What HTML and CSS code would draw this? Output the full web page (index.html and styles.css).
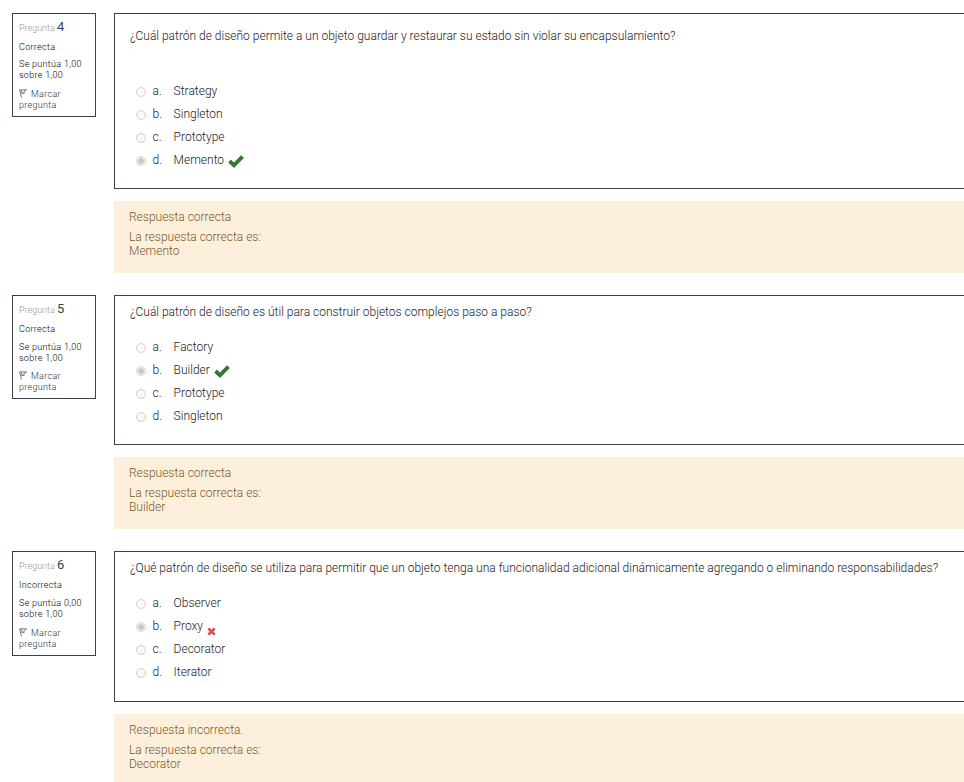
FILE: index.html
```html
<!DOCTYPE html>
<html lang="es">
<head>
<meta charset="utf-8">
<title>Cuestionario</title>
<link rel="stylesheet" href="styles.css">
</head>
<body>
<svg width="0" height="0" class="defs">
  <symbol id="check" viewBox="0 0 16 13"><path d="M0.2 7.4 2.8 4.6 6 7.4 13 0.3 15.9 3 6 12.9z"/></symbol>
  <symbol id="cross" viewBox="0 0 9 9"><path d="M0.4 2.3 2.2 0.5 4.5 2.5 6.8 0.5 8.6 2.3 6.5 4.5 8.6 6.7 6.8 8.5 4.5 6.5 2.2 8.5 0.4 6.7 2.5 4.5z"/></symbol>
  <symbol id="flag" viewBox="0 0 8 9"><path d="M0.3 0.9H7.5L4.8 2.8 5.2 4.4H2.4M0.7 1.2 2.5 8.5M2.2 1.2 3 4.2" fill="none" stroke="currentColor" stroke-width=".8"/></symbol>
</svg>
<main>
  <section class="question first">
    <aside class="info">
      <h3><span>Pregunta</span> <b>4</b></h3>
      <p class="state">Correcta</p>
      <p class="grade">Se puntúa 1,00<br>sobre 1,00</p>
      <p class="mark"><svg class="flag"><use href="#flag"/></svg>Marcar<br>pregunta</p>
    </aside>
    <div class="content">
      <div class="formulation">
        <p class="qtext">¿Cuál patrón de diseño permite a un objeto guardar y restaurar su estado sin violar su encapsulamiento?</p>
        <ul>
          <li><i class="radio"></i><span class="num">a.</span><span>Strategy</span></li>
          <li><i class="radio"></i><span class="num">b.</span><span>Singleton</span></li>
          <li><i class="radio"></i><span class="num">c.</span><span>Prototype</span></li>
          <li><i class="radio on"></i><span class="num">d.</span><span>Memento</span><svg class="check"><use href="#check"/></svg></li>
        </ul>
      </div>
      <div class="feedback"><p>Respuesta correcta</p><p>La respuesta correcta es:<br>Memento</p></div>
    </div>
  </section>
  <section class="question second">
    <aside class="info">
      <h3><span>Pregunta</span> <b>5</b></h3>
      <p class="state">Correcta</p>
      <p class="grade">Se puntúa 1,00<br>sobre 1,00</p>
      <p class="mark"><svg class="flag"><use href="#flag"/></svg>Marcar<br>pregunta</p>
    </aside>
    <div class="content">
      <div class="formulation">
        <p class="qtext">¿Cuál patrón de diseño es útil para construir objetos complejos paso a paso?</p>
        <ul>
          <li><i class="radio"></i><span class="num">a.</span><span>Factory</span></li>
          <li><i class="radio on"></i><span class="num">b.</span><span>Builder</span><svg class="check"><use href="#check"/></svg></li>
          <li><i class="radio"></i><span class="num">c.</span><span>Prototype</span></li>
          <li><i class="radio"></i><span class="num">d.</span><span>Singleton</span></li>
        </ul>
      </div>
      <div class="feedback"><p>Respuesta correcta</p><p>La respuesta correcta es:<br>Builder</p></div>
    </div>
  </section>
  <section class="question third">
    <aside class="info">
      <h3><span>Pregunta</span> <b>6</b></h3>
      <p class="state">Incorrecta</p>
      <p class="grade">Se puntúa 0,00<br>sobre 1,00</p>
      <p class="mark"><svg class="flag"><use href="#flag"/></svg>Marcar<br>pregunta</p>
    </aside>
    <div class="content">
      <div class="formulation">
        <p class="qtext">¿Qué patrón de diseño se utiliza para permitir que un objeto tenga una funcionalidad adicional dinámicamente agregando o eliminando responsabilidades?</p>
        <ul>
          <li><i class="radio"></i><span class="num">a.</span><span>Observer</span></li>
          <li><i class="radio on"></i><span class="num">b.</span><span>Proxy</span><svg class="cross"><use href="#cross"/></svg></li>
          <li><i class="radio"></i><span class="num">c.</span><span>Decorator</span></li>
          <li><i class="radio"></i><span class="num">d.</span><span>Iterator</span></li>
        </ul>
      </div>
      <div class="feedback"><p>Respuesta incorrecta.</p><p>La respuesta correcta es:<br>Decorator</p></div>
    </div>
  </section>
</main>
</body>
</html>
```
FILE: styles.css
```css
* { box-sizing: border-box; margin: 0; padding: 0; }
html, body { height: 782px; overflow: hidden; }
body { background: #fff; font: 300 12px/14px Roboto, sans-serif; color: #1d2125; white-space: nowrap; }
.defs { display: block; }
main { padding: 13px 0 0 12px; }
.question { display: flex; align-items: flex-start; margin-bottom: 22px; }
.info { flex: none; width: 84px; height: 104px; margin-right: 18px; border: 1px solid #36434b; padding: 6px; font-size: 9px; line-height: 11px; letter-spacing: .3px; color: #000; }
.third .info { height: 105px; }
.info h3 { font-size: 9px; font-weight: 300; line-height: 14px; height: 14px; color: #999; letter-spacing: 0; }
.info b { font-size: 13px; font-weight: 400; color: #36434b; margin-left: 0; }
.state { margin-top: 8px; }
.grade { margin-top: 6px; }
.second .grade, .third .grade { margin-top: 7px; }
.mark { margin-top: 8px; color: #27323a; }
.second .mark { margin-top: 7px; }
.flag { width: 8px; height: 9px; margin-right: 4px; vertical-align: -1px; color: #555; }
.content { flex: 1; min-width: 0; }
.formulation { height: 176px; border: 1px solid #36434b; border-right: 0; padding: 15px 0 0 15px; }
.second .formulation { height: 150px; padding-top: 9px; }
.third .formulation { height: 151px; padding-top: 9px; }
.qtext { height: 14px; }
ul { list-style: none; margin-top: 36px; }
.second ul, .third ul { margin-top: 16px; }
li { display: flex; height: 23px; align-items: center; padding-left: 6px; }
.radio { width: 10px; height: 10px; margin: 2px 6.6px 0 0; border: 1px solid #d2d2d2; border-radius: 50%; background: #f8f8f8; }
.radio.on { background: radial-gradient(circle, #c8c8c8 0 2.6px, #f5f5f5 3.4px); }
.num { width: 21px; }
.check { width: 16px; height: 13px; margin: 4px 0 0 4px; fill: #357a32; }
.cross { width: 9px; height: 9px; margin: 11px 0 0 4px; fill: #d9534f; }
.feedback { height: 72px; margin-top: 12px; padding: 9px 15px; background: #fcefdc; color: #7d5a29; }
.feedback p + p { margin-top: 6px; }
```
